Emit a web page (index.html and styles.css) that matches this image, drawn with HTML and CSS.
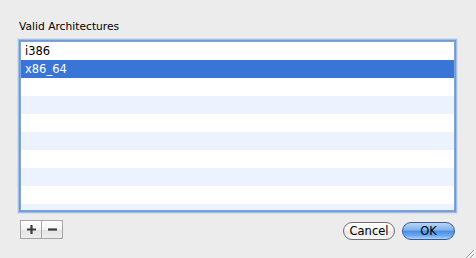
FILE: index.html
```html
<!DOCTYPE html>
<html>
<head>
<meta charset="utf-8">
<link rel="stylesheet" href="styles.css">
</head>
<body>
<div class="dialog">
  <div class="title">Valid Architectures</div>
  <div class="list">
    <div class="row">i386</div>
    <div class="row selected">x86_64</div>
    <div class="row"></div>
    <div class="row alt"></div>
    <div class="row"></div>
    <div class="row alt"></div>
    <div class="row"></div>
    <div class="row alt"></div>
    <div class="row"></div>
    <div class="row alt"></div>
  </div>
  <div class="footer">
    <div class="seg">
      <div class="seg-btn">
        <svg width="11" height="11" viewBox="0 0 11 11"><path d="M5.5 1v9M1 5.5h9" stroke="#3a3a3a" stroke-width="2.2"/></svg>
      </div>
      <div class="seg-btn">
        <svg width="11" height="11" viewBox="0 0 11 11"><path d="M1 5.5h9" stroke="#3a3a3a" stroke-width="2.2"/></svg>
      </div>
    </div>
    <div class="actions">
      <div class="btn cancel">Cancel</div>
      <div class="btn ok">OK</div>
    </div>
  </div>
  <div class="grip">
    <svg width="12" height="12" viewBox="0 0 12 12">
      <path d="M11 2L2 11M11 6L6 11M11 10L10 11" stroke="#a0a0a0" stroke-width="1"/>
      <path d="M12 3L3 12M12 7L7 12" stroke="#ffffff" stroke-width="1"/>
    </svg>
  </div>
</div>
</body>
</html>
```

FILE: styles.css
```css
html, body {
  margin: 0;
  padding: 0;
  background: #ececec;
  width: 476px;
  height: 258px;
  overflow: hidden;
  font-family: "DejaVu Sans", "Lucida Grande", sans-serif;
}
.dialog {
  position: relative;
  width: 476px;
  height: 258px;
  box-sizing: border-box;
  padding: 20px 21px 0 19px;
}
.title {
  font-size: 10.7px;
  line-height: 13px;
  color: #000;
  height: 13px;
  margin-bottom: 9px;
}
.list {
  margin-left: 2px;
  width: 433px;
  height: 168px;
  background: #fff;
  box-shadow: 0 0 0 1px #7ea6dc, 0 0 0 2px #6f9ad8, 0 0 0 3px rgba(120,160,220,0.55), 0 0 0 4px rgba(150,185,230,0.25);
  overflow: hidden;
}
.row {
  height: 18px;
  line-height: 18px;
  font-size: 11.5px;
  padding-left: 4px;
  color: #000;
  background: #fff;
}
.row.alt {
  background: #edf3fe;
}
.row.selected {
  background: #3875d7;
  color: #fff;
}
.footer {
  display: flex;
  justify-content: space-between;
  align-items: flex-start;
  margin-top: 10px;
  padding-left: 1px;
}
.seg {
  display: flex;
  border: 1px solid #a5a5a5;
  height: 17px;
  background: linear-gradient(#ffffff, #f3f3f3 50%, #e4e4e4 51%, #ececec);
}
.seg-btn {
  width: 20px;
  height: 17px;
  display: flex;
  align-items: center;
  justify-content: center;
}
.seg-btn + .seg-btn {
  border-left: 1px solid #a5a5a5;
}
.actions {
  display: flex;
  gap: 7px;
  margin-top: 2px;
}
.btn {
  height: 18px;
  box-sizing: border-box;
  border-radius: 9px;
  font-size: 11.5px;
  line-height: 16px;
  text-align: center;
  color: #000;
}
.cancel {
  width: 52px;
  border: 1px solid #6e6e6e;
  background: linear-gradient(#ffffff, #f4f4f4 50%, #e6e6e6 55%, #f8f8f8);
}
.ok {
  width: 53px;
  border: 1px solid #3a5a95;
  background: linear-gradient(#b9d6f6, #7fb2ec 45%, #4a8ce3 50%, #6eaaf0 80%, #a9d6ff);
}
.grip {
  position: absolute;
  right: 1px;
  bottom: 1px;
  width: 12px;
  height: 12px;
}
```
